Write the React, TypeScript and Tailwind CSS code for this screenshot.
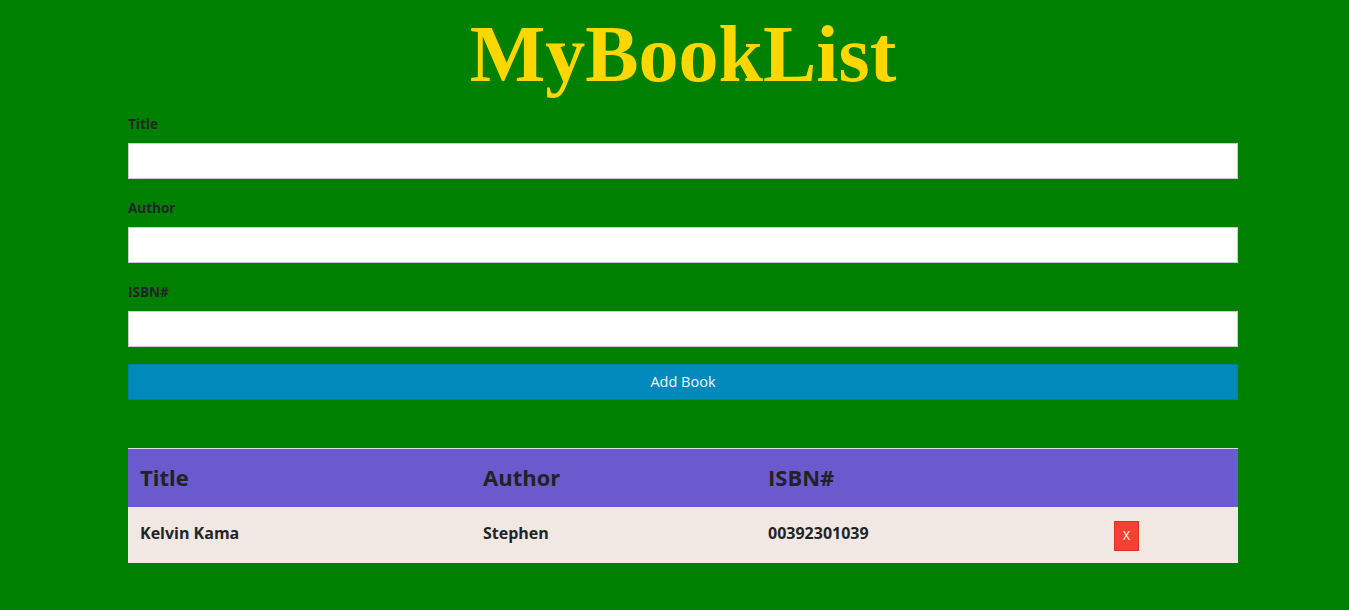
import React from "react"

type Book = { title: string; author: string; isbn: string }

const books: Book[] = [{ title: "Kelvin Kama", author: "Stephen", isbn: "00392301039" }]

/** One labelled input of the form */
function Field({ label, last }: { label: string; last?: boolean }) {
  return (
    <div className={last ? "mb-[17px]" : "mb-[19px]"}>
      <label className="block text-[13.5px] leading-[20px] font-bold text-[#212529] mb-[9px]">
        {label}
      </label>
      <input
        type="text"
        className="block w-full h-[36px] bg-white border border-[#cccccc] px-3 text-[15px] outline-none"
      />
    </div>
  )
}

export default function App() {
  return (
    <div
      className="min-h-[610px] bg-[#008000] text-[#212529]"
      style={{ fontFamily: '"Open Sans", "Liberation Sans", sans-serif' }}
    >
      <div className="w-[1110px] ml-[128px]">
        <h1
          className="pt-[14px] text-center text-[80px] leading-[80px] font-bold text-[#ffd700]"
          style={{ fontFamily: '"Liberation Serif", "Times New Roman", serif' }}
        >
          MyBookList
        </h1>

        <form className="mt-[20px]" onSubmit={(e) => e.preventDefault()}>
          <Field label="Title" />
          <Field label="Author" />
          <Field label="ISBN#" last />
          <button
            type="submit"
            className="block w-full h-[36px] bg-[#0189bc] border border-[#017fae] text-[#eef8fc] text-[14.5px] font-normal"
          >
            Add Book
          </button>
        </form>

        <table className="mt-[48px] w-full table-fixed border-collapse border-t border-t-[#dee2e6]">
          <thead>
            <tr className="bg-[#6a5acd] h-[58px]">
              <th className="w-[343px] px-3 text-left text-[22px] font-bold text-[#222222]">Title</th>
              <th className="w-[285px] px-3 text-left text-[22px] font-bold text-[#222222]">Author</th>
              <th className="w-[346px] px-3 text-left text-[22px] font-bold text-[#222222]">ISBN#</th>
              <th className="px-3"></th>
            </tr>
          </thead>
          <tbody>
            {books.map((book) => (
              <tr key={book.isbn} className="bg-[#f2e8e3] h-[56px]">
                <td className="px-3 pb-[3px] text-[16px] font-bold text-[#212529]">{book.title}</td>
                <td className="px-3 pb-[3px] text-[16px] font-bold text-[#212529]">{book.author}</td>
                <td className="px-3 pb-[3px] text-[16px] font-bold text-[#212529]">{book.isbn}</td>
                <td className="px-3 pt-[2px]">
                  <button className="flex items-center justify-center w-[25px] h-[30px] bg-[#f44131] border border-[#e2331f] text-white text-[12px] font-normal">
                    X
                  </button>
                </td>
              </tr>
            ))}
          </tbody>
        </table>
      </div>
    </div>
  )
}
